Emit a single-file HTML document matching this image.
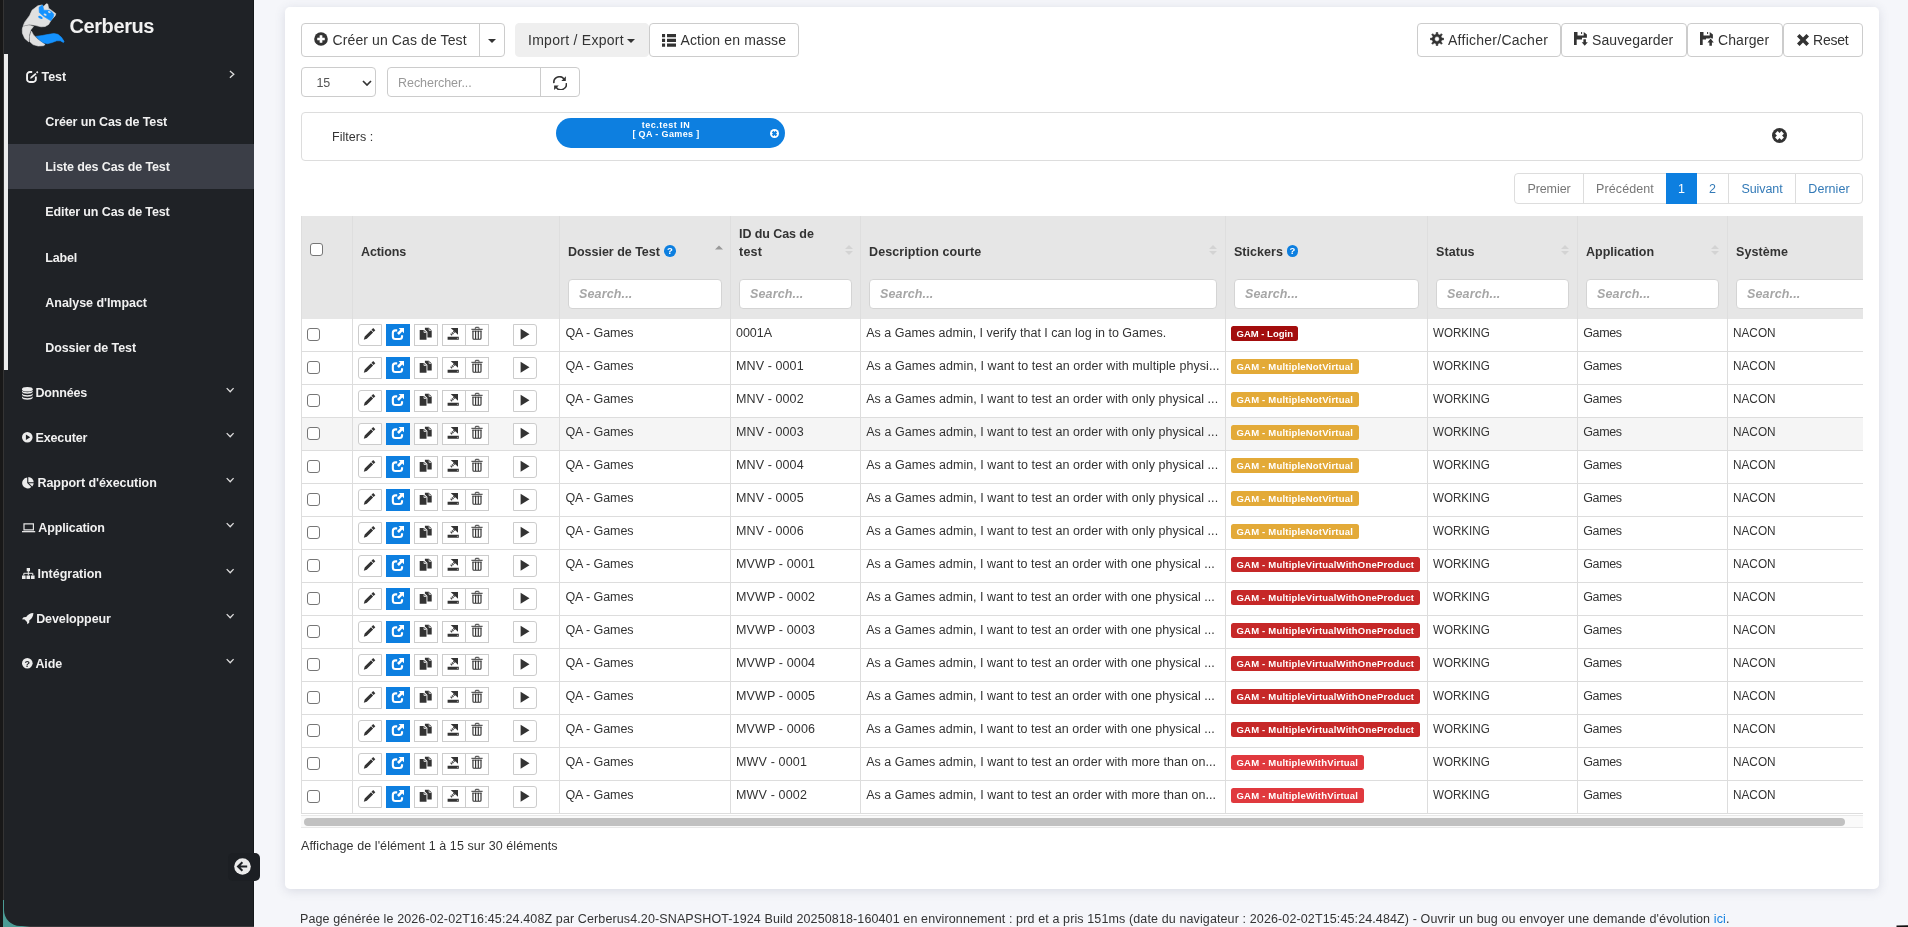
<!DOCTYPE html>
<html lang="fr">
<head>
<meta charset="utf-8">
<title>Cerberus - Liste des Cas de Test</title>
<style>
*{box-sizing:border-box;margin:0;padding:0}
html,body{width:1908px;height:927px;overflow:hidden}
body{background:#f5f6fa;font-family:"Liberation Sans",sans-serif;color:#333;font-size:12.5px;position:relative}
svg{display:block;fill:#333}
#wrap{position:absolute;left:0;top:0;width:1908px;height:927px;overflow:hidden;will-change:transform}
.t{position:absolute;white-space:nowrap;line-height:1}
#edge{position:absolute;left:0;top:0;width:3.4px;height:927px;background:#181818}
#edge2{position:absolute;left:3.4px;top:0;width:1.4px;height:900px;background:#343434}
#corner{position:absolute;left:0;top:887px;width:254px;height:40px;background:linear-gradient(90deg,#4c9c95 0,#4c9c95 22px,#38393b 30px)}
#corner2{position:absolute;left:1897px;top:924.6px;width:30px;height:30px;background:#111;transform:rotate(-2deg)}
/* sidebar */
#side{position:absolute;left:4px;top:0;width:250px;height:926px;background:#1f2226;border-bottom-left-radius:16px;border-right:1px solid #15181b}
#side .bar{position:absolute;left:0;top:54px;width:4px;height:316px;background:#ececec}
#side .active{position:absolute;left:4px;top:144px;width:246px;height:45px;background:#3b3e47}
#side .t{color:#f1f1f1;font-weight:bold;font-size:12.5px;letter-spacing:-.1px}
#side svg{position:absolute;fill:#ececec}
#toggle{position:absolute;left:228px;top:853px;width:32px;height:28px;background:#1c1f23;border-radius:5px}
#toggle svg{position:absolute;left:5.5px;top:4.5px}
/* main card */
#card{position:absolute;left:285px;top:7px;width:1594px;height:882px;background:#fff;border-radius:5px;box-shadow:0 2px 11px rgba(60,70,100,.15)}
.btn{position:absolute;top:23px;height:34px;border:1px solid #ccc;border-radius:4px;background:#fff}
.btn .t{font-size:14px;color:#333;top:9px;letter-spacing:.15px}
.btn svg{position:absolute;fill:#333}
.inp{position:absolute;border:1px solid #ccc;background:#fff;border-radius:4px}
#filter{position:absolute;left:301px;top:112px;width:1562px;height:48.5px;border:1px solid #ddd;border-radius:4px;background:#fff}
#pill span{display:inline-block}
#pill{position:absolute;left:556px;top:118px;width:229px;height:30px;border-radius:15px;background:#0d7fe0;color:#fff;font-weight:bold;font-size:9px;text-align:center;line-height:9.2px;padding:3px 9px 0 0;}
#pill svg{position:absolute;left:214px;top:10.5px}
#pag{position:absolute;left:1514px;top:173px;height:31px;width:349px}
#pag b{font-weight:normal;display:inline-block}
#pag span{position:absolute;top:0;height:31px;border:1px solid #ddd;line-height:30.5px;text-align:center;font-size:12.5px;color:#777;background:#fff;letter-spacing:-.05px}
#pag span.l{color:#337ab7}
#pag span.on{background:#0d7fe0;color:#fff;border-color:#0d7fe0}
/* table */
#tbl{position:absolute;left:301px;top:216px;width:1562px;height:598px;overflow:hidden}
#thead{position:absolute;left:0;top:0;width:1600px;height:102.6px;background:#e6e6e6}
#thead .v{position:absolute;top:0;width:1px;height:103px;background:#dedede}
#thead .t{font-weight:bold;font-size:12.5px;color:#333;letter-spacing:-.05px}
#thead .inp{top:63px;height:30px;border-color:#d4d4d4}
#thead .inp .t{font-style:italic;font-weight:bold;color:#a6a6a6;left:10px;top:8px;font-size:12.5px;letter-spacing:.1px}
#thead svg{position:absolute}
.q{position:absolute;width:11.6px;height:11.6px;border-radius:50%;background:#0d7fe0;color:#fff;font-size:9.5px;font-weight:bold;font-style:normal;text-align:center;line-height:12px}
.row{position:absolute;left:0;width:1600px;height:33px;border-bottom:1px solid #ddd;background:#fff}
.row.hov{background:#f5f5f5}
.vl{position:absolute;top:102px;width:1px;height:496px;background:#ddd}
.cb{position:absolute;left:6px;top:9px;width:13px;height:13px;border:1.3px solid #767676;border-radius:3px;background:#fff}
.ab{position:absolute;top:5px;width:24px;height:22px;border:1px solid #ccc;background:#fff}
.ab svg{position:absolute;fill:#333}
.ab.blue{background:#0d7fe0;border-color:#0d7fe0}.ab.first{border-radius:3px 0 0 3px}.ab.last{border-radius:0 3px 3px 0}
.c{position:absolute;top:8px;white-space:nowrap;line-height:1;font-size:12.5px;color:#333}
.c.up{transform-origin:0 0}
.st span{display:inline-block}
.st{position:absolute;left:930px;top:7px;height:14.5px;line-height:15.6px;padding:0 5.5px;border-radius:2.5px;color:#fff;font-weight:bold;font-size:9.5px;white-space:nowrap;letter-spacing:.2px}
.s1{background:#a30d0d}.s2{background:#e3aa38}.s3{background:#c62828}.s4{background:#e0393e}
#sb{position:absolute;left:301px;top:815px;width:1562px;height:13px;background:#fafafa;border-top:1px solid #e8e8e8;border-bottom:1px solid #e8e8e8}
#sb i{position:absolute;left:2.5px;top:2px;width:1541px;height:7.5px;border-radius:4px;background:#c1c1c1}
</style>
</head>
<body>
<div id="wrap">
<div id="corner"></div>
<div id="corner2"></div>
<div id="edge"></div><div id="edge2"></div>
<div id="side">
  <div class="bar"></div>
  <div class="active"></div>
  <svg width="60" height="54" viewBox="0 0 60 54" style="left:12px;top:0"><path d="M7.28 25.63 8.74 22.13 13.69 15.43 16.02 10.19 21.84 5.82 26.21 4.95 27.66 6.41 30.29 3.79 31.74 4.08 32.62 8.15 37.27 11.65 39.90 13.69 39.02 16.02 34.94 20.38 32.62 24.46 29.12 26.50 25.04 26.79 19.22 25.33 13.40 24.46ZM6.99 26.50 13.40 25.33 17.47 26.50 14.85 29.70 13.10 34.94 12.81 41.93 8.74 38.44 6.41 33.20 6.29 29.12ZM15.43 31.16 17.47 34.94 22.13 39.60 29.12 44.55 27.37 45.72 22.13 46.01 16.89 44.55 13.98 41.64 13.86 36.11Z" fill="#e0e0e0" stroke="#e0e0e0" stroke-width=".6" stroke-linejoin="round"/><path d="M23.01 7.28 26.50 4.95 27.84 10.19 32.62 10.37 35.53 11.65 37.86 14.27 37.27 16.89 34.94 20.68 33.20 19.80 27.96 16.60 23.30 12.52ZM20.09 36.40 26.21 35.53 32.62 34.36 37.86 33.49 41.93 34.36 45.43 37.27 48.05 41.35 47.47 42.52 44.26 40.77 40.77 40.77 36.11 42.52 31.45 43.68 27.37 42.81 23.30 39.90Z" fill="#1492ff" stroke="#1492ff" stroke-width=".6" stroke-linejoin="round"/><ellipse cx="24.4" cy="17.4" rx="2.4" ry="1.2" transform="rotate(25 24.4 17.4)" fill="#1492ff"/><ellipse cx="29.1" cy="14.6" rx="1.6" ry="1" transform="rotate(25 29.1 14.6)" fill="#e0e0e0"/><ellipse cx="33.3" cy="12.1" rx="1.45" ry=".85" transform="rotate(25 33.3 12.1)" fill="#e0e0e0"/></svg>
  <span class="t" style="left:65.4px;top:16px;font-size:20px;letter-spacing:-.45px;letter-spacing:-.39px">Cerberus</span>
  <svg width="13" height="13" viewBox="0 0 13 13" style="left:22px;top:70px"><path d="M6.2 2H3.8A2.75 2.75 0 0 0 1.05 4.75V9.2A2.75 2.75 0 0 0 3.8 11.95H7.1A2.75 2.75 0 0 0 9.85 9.2V6.6" fill="none" stroke="#f1f1f1" stroke-width="1.9"/><path d="M4.6 6.9 9.3 2.9 10.5 4.3 5.8 8.3 4.2 8.7ZM10 2.3 11.2 1.1 12.4 2.3 11.2 3.5Z" fill="#f1f1f1"/></svg><span class="t" style="left:37.5px;top:71px;letter-spacing:-.02px">Test</span><svg width="8" height="11" viewBox="0 0 8 11" style="left:224px;top:69px"><path d="M1.9 2 5.8 5.2 1.9 8.7" fill="none" stroke="#ddd" stroke-width="1.3"/></svg>
  <span class="t" style="left:41.3px;top:116px;letter-spacing:-.12px">Créer un Cas de Test</span>
  <span class="t" style="left:41.3px;top:161px;letter-spacing:-.12px">Liste des Cas de Test</span>
  <span class="t" style="left:41.3px;top:206px;letter-spacing:-.12px">Editer un Cas de Test</span>
  <span class="t" style="left:41.3px;top:252px;letter-spacing:-.21px">Label</span>
  <span class="t" style="left:41.3px;top:297px;letter-spacing:-.04px">Analyse d'Impact</span>
  <span class="t" style="left:41.3px;top:342px;letter-spacing:-.10px">Dossier de Test</span>
  <svg width="11" height="13" viewBox="0 0 11 13" style="left:17.8px;top:386.5px"><ellipse cx="5.35" cy="2.3" rx="5.35" ry="2.3"/><path d="M0 3.3C0 5.9 10.7 5.9 10.7 3.3V4.5C10.7 7.5 0 7.5 0 4.5Z"/><path d="M0 6.3C0 8.9 10.7 8.9 10.7 6.3V7.5C10.7 10.5 0 10.5 0 7.5Z"/><path d="M0 9.3C0 11.9 10.7 11.9 10.7 9.3V10.5C10.7 13.5 0 13.5 0 10.5Z"/></svg><span class="t" style="left:31.5px;top:387px;letter-spacing:-.18px">Données</span>
  <svg width="11" height="11" viewBox="0 0 11 11" style="left:17.8px;top:432.3px"><path fill-rule="evenodd" d="M5.3 0A5.3 5.3 0 1 0 5.3 10.6 5.3 5.3 0 1 0 5.3 0ZM3.9 2.6 8.2 5.3 3.9 8Z"/></svg><span class="t" style="left:31.5px;top:432px;letter-spacing:-.13px">Executer</span>
  <svg width="12" height="12" viewBox="0 0 12 12" style="left:17.8px;top:476.8px"><path d="M5.2.6A5.4 5.4 0 1 0 9.3 9.9L5.2 6Z"/><path d="M6.3 0A5.4 5.4 0 0 1 11.7 5.2H6.3Z"/><path d="M6.9 6.3H11.7A5.4 5.4 0 0 1 10.2 9.4Z"/></svg><span class="t" style="left:33.5px;top:477px;letter-spacing:-.06px">Rapport d'éxecution</span>
  <svg width="14" height="10" viewBox="0 0 14 10" style="left:17.8px;top:522.5px"><path d="M2 .9H11.4V6.8H2Z" fill="none" stroke="#e4e4e4" stroke-width="1.2"/><path d="M0 8H13.2V9.3H0Z" fill="#e4e4e4"/></svg><span class="t" style="left:34.3px;top:522px;letter-spacing:-.14px">Application</span>
  <svg width="13" height="11" viewBox="0 0 13 11" style="left:17.7px;top:568px"><path d="M4.7 0H8V3.2H4.7ZM0 7.4H3.6V11H0ZM4.5 7.4H8.1V11H4.5ZM9 7.4H12.6V11H9Z"/><path d="M6.3 3V7.4M1.8 7.4V5.3H10.8V7.4" fill="none" stroke="#ececec" stroke-width="1"/></svg><span class="t" style="left:33.5px;top:568px;letter-spacing:-.01px">Intégration</span>
  <svg width="12" height="11.5" viewBox="0 0 12 11.5" style="left:17.7px;top:613.4px"><path d="M11.4 0C8 .1 5.6 1.6 4.2 4.1L1.6 4.3 0 6.2 2.6 6.5 5 8.9 5.3 11.3 7.2 9.8 7.4 7.2C9.9 5.8 11.3 3.4 11.4 0Z"/></svg><span class="t" style="left:32.2px;top:613px;letter-spacing:-.10px">Developpeur</span>
  <svg width="11" height="11" viewBox="0 0 11 11" style="left:17.7px;top:658.3px"><circle cx="5.3" cy="5.3" r="5.3"/><text x="5.3" y="8.5" text-anchor="middle" font-family="Liberation Sans, sans-serif" font-weight="bold" font-size="9" fill="#1f2226">?</text></svg><span class="t" style="left:31.5px;top:658px;letter-spacing:-.17px">Aide</span>
  <svg width="10" height="6" viewBox="0 0 10 6" style="left:221px;top:387px"><path d="M1.7 1.1 5.2 4.7 8.6 1.1" fill="none" stroke="#ddd" stroke-width="1.3"/></svg><svg width="10" height="6" viewBox="0 0 10 6" style="left:221px;top:432px"><path d="M1.7 1.1 5.2 4.7 8.6 1.1" fill="none" stroke="#ddd" stroke-width="1.3"/></svg><svg width="10" height="6" viewBox="0 0 10 6" style="left:221px;top:477px"><path d="M1.7 1.1 5.2 4.7 8.6 1.1" fill="none" stroke="#ddd" stroke-width="1.3"/></svg><svg width="10" height="6" viewBox="0 0 10 6" style="left:221px;top:522px"><path d="M1.7 1.1 5.2 4.7 8.6 1.1" fill="none" stroke="#ddd" stroke-width="1.3"/></svg><svg width="10" height="6" viewBox="0 0 10 6" style="left:221px;top:568px"><path d="M1.7 1.1 5.2 4.7 8.6 1.1" fill="none" stroke="#ddd" stroke-width="1.3"/></svg><svg width="10" height="6" viewBox="0 0 10 6" style="left:221px;top:613px"><path d="M1.7 1.1 5.2 4.7 8.6 1.1" fill="none" stroke="#ddd" stroke-width="1.3"/></svg><svg width="10" height="6" viewBox="0 0 10 6" style="left:221px;top:658px"><path d="M1.7 1.1 5.2 4.7 8.6 1.1" fill="none" stroke="#ddd" stroke-width="1.3"/></svg>
</div>
<div id="toggle"><svg width="17" height="17" viewBox="0 0 17 17"><circle cx="8.5" cy="8.5" r="8.3" fill="#ececec"/><path d="M8.4 4.2 4 8.5 8.4 12.8M4.4 8.5H13.2" fill="none" stroke="#1f2226" stroke-width="2"/></svg></div>
<div id="card"></div>
<div id="main">
  <div class="btn" style="left:301px;width:204px"><span style="position:absolute;left:12px;top:8px"><svg width="14" height="14" viewBox="0 0 14 14"><circle cx="7" cy="7" r="6.8"/><path d="M5.9 3.5H8.1V5.9H10.5V8.1H8.1V10.5H5.9V8.1H3.5V5.9H5.9Z" fill="#fff" stroke="#fff" stroke-width=".5" stroke-linejoin="round"/></svg></span><span class="t" style="left:30.5px;letter-spacing:.11px">Créer un Cas de Test</span><i style="position:absolute;left:177px;top:-1px;width:1px;height:34px;background:#ccc"></i><span style="position:absolute;left:186px;top:15px"><svg width="8" height="4" viewBox="0 0 8 4"><path d="M0 0H8L4 4Z"/></svg></span></div>
  <div class="btn" style="left:515px;width:134px;background:#efefef;border-color:#efefef"><span class="t" style="left:12px;letter-spacing:.27px">Import / Export</span><span style="position:absolute;left:111px;top:15px"><svg width="8" height="4" viewBox="0 0 8 4"><path d="M0 0H8L4 4Z"/></svg></span></div>
  <div class="btn" style="left:649px;width:150px"><span style="position:absolute;left:12px;top:10px"><svg width="14" height="13" viewBox="0 0 14 13"><path d="M0 0H3.1V3.3H0ZM5 0H14V3.3H5ZM0 4.75H3.1V8.05H0ZM5 4.75H14V8.05H5ZM0 9.5H3.1V12.8H0ZM5 9.5H14V12.8H5Z"/></svg></span><span class="t" style="left:30.5px;letter-spacing:.14px">Action en masse</span></div>
  <div class="btn" style="left:1417px;width:143.5px"><span style="position:absolute;left:12px;top:8px"><svg width="14" height="14" viewBox="0 0 14 14"><path fill-rule="evenodd" stroke="#333" stroke-width=".5" stroke-linejoin="round" d="M6.30 0.14 7.70 0.14 7.96 2.19 9.72 2.93 11.36 1.65 12.35 2.64 11.07 4.28 11.81 6.04 13.86 6.30 13.86 7.70 11.81 7.96 11.07 9.72 12.35 11.36 11.36 12.35 9.72 11.07 7.96 11.81 7.70 13.86 6.30 13.86 6.04 11.81 4.28 11.07 2.64 12.35 1.65 11.36 2.93 9.72 2.19 7.96 0.14 7.70 0.14 6.30 2.19 6.04 2.93 4.28 1.65 2.64 2.64 1.65 4.28 2.93 6.04 2.19ZM4.6 7a2.4 2.4 0 1 0 4.8 0a2.4 2.4 0 1 0 -4.8 0Z"/></svg></span><span class="t" style="left:30px;letter-spacing:.26px">Afficher/Cacher</span></div>
  <div class="btn" style="left:1561px;width:125.5px"><span style="position:absolute;left:12px;top:8px"><svg width="14" height="14" viewBox="0 0 14 14"><path d="M0 0H3.5V3.5H9.7V0L12.9 2.6V5.8H8V7.6H2.7V12.9H0ZM7.1 0H8.1V2H7.1ZM9.4 7.2H11.9V10.3H13.8L10.7 13.8 7.7 10.3H9.4Z"/></svg></span><span class="t" style="left:30px;letter-spacing:.11px">Sauvegarder</span></div>
  <div class="btn" style="left:1687px;width:95.5px"><span style="position:absolute;left:12px;top:8px"><svg width="14" height="14" viewBox="0 0 14 14"><path d="M0 0H3.5V3.5H9.7V0L12.9 2.6V6.6H6V7.6H2.7V12.9H0ZM7.1 0H8.1V2H7.1Z"/><path d="M9.4 13.8H11.9V10.4H13.8L10.6 6.6 7.5 10.4H9.4Z" stroke="#fff" stroke-width="1.3" paint-order="stroke"/></svg></span><span class="t" style="left:30px;letter-spacing:.09px">Charger</span></div>
  <div class="btn" style="left:1783px;width:80px"><span style="position:absolute;left:13px;top:10px"><svg width="12" height="12" viewBox="0 0 11.3 11.3"><path d="M2.4 0 5.65 3.25 8.9 0 11.3 2.4 8.05 5.65 11.3 8.9 8.9 11.3 5.65 8.05 2.4 11.3 0 8.9 3.25 5.65 0 2.4Z"/></svg></span><span class="t" style="left:29px;letter-spacing:-.22px">Reset</span></div>

  <div class="inp" style="left:301px;top:67px;width:75px;height:30px"><span class="t" style="left:14.4px;top:8.5px;font-size:12.5px;color:#555">15</span><svg width="10" height="6" viewBox="0 0 10 6" style="position:absolute;left:59.5px;top:12px"><path d="M1 1 5 5 9 1" fill="none" stroke="#333" stroke-width="1.7"/></svg></div>
  <div class="inp" style="left:387px;top:67px;width:193px;height:30px"><span class="t" style="left:10px;top:9px;font-size:12.5px;color:#999;letter-spacing:-.05px">Rechercher...</span><i style="position:absolute;left:152px;top:0;width:1px;height:28px;background:#ccc"></i><span style="position:absolute;left:165px;top:7.8px"><svg width="14" height="14.2" viewBox="0 0 14 14.2"><path d="M.9 7.1A5.6 5.6 0 0 1 11.2 3.4M13.3 7.2A5.6 5.6 0 0 1 2.9 10.9" fill="none" stroke="#333" stroke-width="1.6"/><path d="M8.3 4.9 12.9.3 12.8 5.1ZM1.1 9.5 1.1 13.9 5.8 9.6Z"/></svg></span></div>

  <div id="filter"><span class="t" style="left:30px;top:17.5px;font-size:12.5px;letter-spacing:-.1px;letter-spacing:.04px">Filters :</span><span style="position:absolute;left:1470px;top:15.2px"><svg width="15" height="15" viewBox="0 0 14 14"><circle cx="7" cy="7" r="7" fill="#333"/><path d="M5.25 2.85 7 4.6 8.75 2.85 11.15 5.25 9.4 7 11.15 8.75 8.75 11.15 7 9.4 5.25 11.15 2.85 8.75 4.6 7 2.85 5.25Z" fill="#fff"/></svg></span></div>
  <div id="pill"><span style="letter-spacing:.52px">tec.test IN</span><br><span style="letter-spacing:.36px">[ QA - Games ]</span><svg width="9" height="9" viewBox="0 0 14 14"><circle cx="7" cy="7" r="7" fill="#fff"/><path d="M5.25 2.85 7 4.6 8.75 2.85 11.15 5.25 9.4 7 11.15 8.75 8.75 11.15 7 9.4 5.25 11.15 2.85 8.75 4.6 7 2.85 5.25Z" fill="#0d7fe0"/></svg></div>

  <div id="pag"><span style="left:0;width:70px;border-radius:4px 0 0 4px"><b style="letter-spacing:-.08px">Premier</b></span><span style="left:69px;width:84px"><b style="letter-spacing:.09px">Précédent</b></span><span class="l" style="left:182px;width:33px">2</span><span class="l" style="left:214px;width:68px"><b style="letter-spacing:-.07px">Suivant</b></span><span class="l" style="left:281px;width:68px;border-radius:0 4px 4px 0"><b style="letter-spacing:.04px">Dernier</b></span><span class="on" style="left:152px;width:31px">1</span></div>

  <div id="tbl">
    <div id="thead">
      <i class="v" style="left:0"></i><i class="v" style="left:51px"></i><i class="v" style="left:258px"></i><i class="v" style="left:429px"></i><i class="v" style="left:559px"></i><i class="v" style="left:924px"></i><i class="v" style="left:1126px"></i><i class="v" style="left:1276px"></i><i class="v" style="left:1426px"></i>
      <i class="cb" style="left:9px;top:27px"></i>
      <span class="t" style="left:60px;top:30px;letter-spacing:-.12px">Actions</span>
      <span class="t" style="left:267px;top:30px;letter-spacing:-.02px">Dossier de Test</span><i class="q" style="left:363px;top:29px">?</i>
      <span class="t" style="left:438px;top:11.5px;letter-spacing:-.08px">ID du Cas de</span><span class="t" style="left:438px;top:30px;letter-spacing:.22px">test</span>
      <span class="t" style="left:568px;top:30px;letter-spacing:.10px">Description courte</span>
      <span class="t" style="left:933px;top:30px;letter-spacing:.03px">Stickers</span><i class="q" style="left:985.5px;top:29px">?</i>
      <span class="t" style="left:1135px;top:30px;letter-spacing:.07px">Status</span>
      <span class="t" style="left:1285px;top:30px;letter-spacing:.00px">Application</span>
      <span class="t" style="left:1435px;top:30px;letter-spacing:.07px">Système</span>
      <span style="position:absolute;left:413.8px;top:29.3px"><svg width="8" height="5" viewBox="0 0 8 5"><path d="M0 4.5H8L4 .5Z" fill="#999"/></svg></span>
      <span style="position:absolute;left:543.5px;top:28px"><svg width="8" height="12" viewBox="0 0 8 12"><path d="M0 5H8L4 1Z" fill="#d3d3d3"/><path d="M0 7H8L4 11Z" fill="#d3d3d3"/></svg></span>
      <span style="position:absolute;left:908px;top:28px"><svg width="8" height="12" viewBox="0 0 8 12"><path d="M0 5H8L4 1Z" fill="#d3d3d3"/><path d="M0 7H8L4 11Z" fill="#d3d3d3"/></svg></span>
      <span style="position:absolute;left:1260px;top:28px"><svg width="8" height="12" viewBox="0 0 8 12"><path d="M0 5H8L4 1Z" fill="#d3d3d3"/><path d="M0 7H8L4 11Z" fill="#d3d3d3"/></svg></span>
      <span style="position:absolute;left:1410px;top:28px"><svg width="8" height="12" viewBox="0 0 8 12"><path d="M0 5H8L4 1Z" fill="#d3d3d3"/><path d="M0 7H8L4 11Z" fill="#d3d3d3"/></svg></span>
      <div class="inp" style="left:267px;width:154px"><span class="t" style="letter-spacing:.15px">Search...</span></div>
      <div class="inp" style="left:438px;width:113px"><span class="t" style="letter-spacing:.15px">Search...</span></div>
      <div class="inp" style="left:568px;width:348px"><span class="t" style="letter-spacing:.15px">Search...</span></div>
      <div class="inp" style="left:933px;width:185px"><span class="t" style="letter-spacing:.15px">Search...</span></div>
      <div class="inp" style="left:1135px;width:133px"><span class="t" style="letter-spacing:.15px">Search...</span></div>
      <div class="inp" style="left:1285px;width:133px"><span class="t" style="letter-spacing:.15px">Search...</span></div>
      <div class="inp" style="left:1435px;width:160px"><span class="t" style="letter-spacing:.15px">Search...</span></div>
    </div>
<div class="row" style="top:103px">
<i class="cb"></i>
<a class="ab first" style="left:57px"><svg width="24" height="22" viewBox="0 0 24 22" style="left:-1px;top:-1px"><path transform="translate(5.6 4)" d="M.2 11.8 1.1 8.6 7.4 2.3 9.5 4.4 3.2 10.7ZM7.9 1.8 9.6.1 11.7 2.2 10 3.9Z"/></svg></a><a class="ab blue" style="left:85px"><svg width="24" height="22" viewBox="0 0 24 22" style="left:-1px;top:-1px"><g transform="translate(5.8 3.9)"><path d="M5.4 2.45H3.6A2.55 2.55 0 0 0 1.05 5V8.6A2.55 2.55 0 0 0 3.6 11.15H7.7A2.55 2.55 0 0 0 10.25 8.6V7.4" fill="none" stroke="#fff" stroke-width="2.1"/><path d="M6.8 0H12.2V5.4L10.45 3.65 7.1 7 5.2 5.1 8.55 1.75Z" fill="#fff"/></g></svg></a><a class="ab" style="left:113px"><svg width="24" height="22" viewBox="0 0 24 22" style="left:-1px;top:-1px"><g transform="translate(5.7 3.8)"><path d="M0 2.2H4.3L6.8 4.7V11.9H0ZM5.2 0H9.3L12 2.7V9.8H7.7V4.3L5.2 1.8Z"/><path d="M9.4.4V2.6H11.7M4.3 2.6V4.7H6.5" stroke="#fff" stroke-width=".7" fill="none"/></g></svg></a><a class="ab" style="left:141px"><svg width="24" height="22" viewBox="0 0 24 22" style="left:-1px;top:-1px"><path d="M5.6 12.8H16.8V15.7H5.6ZM8.7 3.9H16V10.7Z"/><path d="M12.6 7.4 8.9 10.9" stroke="#444" stroke-width="2.2" stroke-dasharray="1.3 .6" fill="none"/><circle cx="15.4" cy="14.3" r=".55" fill="#ccc"/></svg></a><a class="ab" style="left:164px"><svg width="24" height="22" viewBox="0 0 24 22" style="left:-1px;top:-1px"><path d="M6.4 4.8H17.6V5.8H6.4Z"/><path d="M10.3 4.8V3.9A.6.6 0 0 1 10.9 3.3H13.4A.6.6 0 0 1 14 3.9V4.8" fill="none" stroke="#333" stroke-width="1"/><path d="M7.95 6.8V14.2A1 1 0 0 0 8.95 15.2H15A1 1 0 0 0 16 14.2V6.8M10.6 6.8V15M13.3 6.8V15" fill="none" stroke="#333" stroke-width="1.15"/><path d="M7.4 6.7H16.55V7.6H7.4Z"/></svg></a><a class="ab last" style="left:212px"><svg width="24" height="22" viewBox="0 0 24 22" style="left:-1px;top:-1px"><path d="M7.6 4.8 16.5 10.25 7.6 15.7Z"/></svg></a>
<span class="c" style="left:264.4px;letter-spacing:-.07px">QA - Games</span><span class="c" style="left:435px;letter-spacing:-.03px">0001A</span><span class="c" style="left:565.2px;letter-spacing:.01px">As a Games admin, I verify that I can log in to Games.</span><span class="st s1"><span style="letter-spacing:.00px">GAM - Login</span></span><span class="c up" style="left:1132.3px;transform:scaleX(0.928)">WORKING</span><span class="c" style="left:1282.2px;letter-spacing:-.34px">Games</span><span class="c up" style="left:1432.3px;transform:scaleX(0.943)">NACON</span>
</div>
<div class="row" style="top:136px">
<i class="cb"></i>
<a class="ab first" style="left:57px"><svg width="24" height="22" viewBox="0 0 24 22" style="left:-1px;top:-1px"><path transform="translate(5.6 4)" d="M.2 11.8 1.1 8.6 7.4 2.3 9.5 4.4 3.2 10.7ZM7.9 1.8 9.6.1 11.7 2.2 10 3.9Z"/></svg></a><a class="ab blue" style="left:85px"><svg width="24" height="22" viewBox="0 0 24 22" style="left:-1px;top:-1px"><g transform="translate(5.8 3.9)"><path d="M5.4 2.45H3.6A2.55 2.55 0 0 0 1.05 5V8.6A2.55 2.55 0 0 0 3.6 11.15H7.7A2.55 2.55 0 0 0 10.25 8.6V7.4" fill="none" stroke="#fff" stroke-width="2.1"/><path d="M6.8 0H12.2V5.4L10.45 3.65 7.1 7 5.2 5.1 8.55 1.75Z" fill="#fff"/></g></svg></a><a class="ab" style="left:113px"><svg width="24" height="22" viewBox="0 0 24 22" style="left:-1px;top:-1px"><g transform="translate(5.7 3.8)"><path d="M0 2.2H4.3L6.8 4.7V11.9H0ZM5.2 0H9.3L12 2.7V9.8H7.7V4.3L5.2 1.8Z"/><path d="M9.4.4V2.6H11.7M4.3 2.6V4.7H6.5" stroke="#fff" stroke-width=".7" fill="none"/></g></svg></a><a class="ab" style="left:141px"><svg width="24" height="22" viewBox="0 0 24 22" style="left:-1px;top:-1px"><path d="M5.6 12.8H16.8V15.7H5.6ZM8.7 3.9H16V10.7Z"/><path d="M12.6 7.4 8.9 10.9" stroke="#444" stroke-width="2.2" stroke-dasharray="1.3 .6" fill="none"/><circle cx="15.4" cy="14.3" r=".55" fill="#ccc"/></svg></a><a class="ab" style="left:164px"><svg width="24" height="22" viewBox="0 0 24 22" style="left:-1px;top:-1px"><path d="M6.4 4.8H17.6V5.8H6.4Z"/><path d="M10.3 4.8V3.9A.6.6 0 0 1 10.9 3.3H13.4A.6.6 0 0 1 14 3.9V4.8" fill="none" stroke="#333" stroke-width="1"/><path d="M7.95 6.8V14.2A1 1 0 0 0 8.95 15.2H15A1 1 0 0 0 16 14.2V6.8M10.6 6.8V15M13.3 6.8V15" fill="none" stroke="#333" stroke-width="1.15"/><path d="M7.4 6.7H16.55V7.6H7.4Z"/></svg></a><a class="ab last" style="left:212px"><svg width="24" height="22" viewBox="0 0 24 22" style="left:-1px;top:-1px"><path d="M7.6 4.8 16.5 10.25 7.6 15.7Z"/></svg></a>
<span class="c" style="left:264.4px;letter-spacing:-.07px">QA - Games</span><span class="c" style="left:435px;letter-spacing:.10px">MNV - 0001</span><span class="c" style="left:565.2px;letter-spacing:.06px">As a Games admin, I want to test an order with multiple physi...</span><span class="st s2"><span style="letter-spacing:.20px">GAM - MultipleNotVirtual</span></span><span class="c up" style="left:1132.3px;transform:scaleX(0.928)">WORKING</span><span class="c" style="left:1282.2px;letter-spacing:-.34px">Games</span><span class="c up" style="left:1432.3px;transform:scaleX(0.943)">NACON</span>
</div>
<div class="row" style="top:169px">
<i class="cb"></i>
<a class="ab first" style="left:57px"><svg width="24" height="22" viewBox="0 0 24 22" style="left:-1px;top:-1px"><path transform="translate(5.6 4)" d="M.2 11.8 1.1 8.6 7.4 2.3 9.5 4.4 3.2 10.7ZM7.9 1.8 9.6.1 11.7 2.2 10 3.9Z"/></svg></a><a class="ab blue" style="left:85px"><svg width="24" height="22" viewBox="0 0 24 22" style="left:-1px;top:-1px"><g transform="translate(5.8 3.9)"><path d="M5.4 2.45H3.6A2.55 2.55 0 0 0 1.05 5V8.6A2.55 2.55 0 0 0 3.6 11.15H7.7A2.55 2.55 0 0 0 10.25 8.6V7.4" fill="none" stroke="#fff" stroke-width="2.1"/><path d="M6.8 0H12.2V5.4L10.45 3.65 7.1 7 5.2 5.1 8.55 1.75Z" fill="#fff"/></g></svg></a><a class="ab" style="left:113px"><svg width="24" height="22" viewBox="0 0 24 22" style="left:-1px;top:-1px"><g transform="translate(5.7 3.8)"><path d="M0 2.2H4.3L6.8 4.7V11.9H0ZM5.2 0H9.3L12 2.7V9.8H7.7V4.3L5.2 1.8Z"/><path d="M9.4.4V2.6H11.7M4.3 2.6V4.7H6.5" stroke="#fff" stroke-width=".7" fill="none"/></g></svg></a><a class="ab" style="left:141px"><svg width="24" height="22" viewBox="0 0 24 22" style="left:-1px;top:-1px"><path d="M5.6 12.8H16.8V15.7H5.6ZM8.7 3.9H16V10.7Z"/><path d="M12.6 7.4 8.9 10.9" stroke="#444" stroke-width="2.2" stroke-dasharray="1.3 .6" fill="none"/><circle cx="15.4" cy="14.3" r=".55" fill="#ccc"/></svg></a><a class="ab" style="left:164px"><svg width="24" height="22" viewBox="0 0 24 22" style="left:-1px;top:-1px"><path d="M6.4 4.8H17.6V5.8H6.4Z"/><path d="M10.3 4.8V3.9A.6.6 0 0 1 10.9 3.3H13.4A.6.6 0 0 1 14 3.9V4.8" fill="none" stroke="#333" stroke-width="1"/><path d="M7.95 6.8V14.2A1 1 0 0 0 8.95 15.2H15A1 1 0 0 0 16 14.2V6.8M10.6 6.8V15M13.3 6.8V15" fill="none" stroke="#333" stroke-width="1.15"/><path d="M7.4 6.7H16.55V7.6H7.4Z"/></svg></a><a class="ab last" style="left:212px"><svg width="24" height="22" viewBox="0 0 24 22" style="left:-1px;top:-1px"><path d="M7.6 4.8 16.5 10.25 7.6 15.7Z"/></svg></a>
<span class="c" style="left:264.4px;letter-spacing:-.07px">QA - Games</span><span class="c" style="left:435px;letter-spacing:.10px">MNV - 0002</span><span class="c" style="left:565.2px;letter-spacing:.05px">As a Games admin, I want to test an order with only physical ...</span><span class="st s2"><span style="letter-spacing:.20px">GAM - MultipleNotVirtual</span></span><span class="c up" style="left:1132.3px;transform:scaleX(0.928)">WORKING</span><span class="c" style="left:1282.2px;letter-spacing:-.34px">Games</span><span class="c up" style="left:1432.3px;transform:scaleX(0.943)">NACON</span>
</div>
<div class="row hov" style="top:202px">
<i class="cb"></i>
<a class="ab first" style="left:57px"><svg width="24" height="22" viewBox="0 0 24 22" style="left:-1px;top:-1px"><path transform="translate(5.6 4)" d="M.2 11.8 1.1 8.6 7.4 2.3 9.5 4.4 3.2 10.7ZM7.9 1.8 9.6.1 11.7 2.2 10 3.9Z"/></svg></a><a class="ab blue" style="left:85px"><svg width="24" height="22" viewBox="0 0 24 22" style="left:-1px;top:-1px"><g transform="translate(5.8 3.9)"><path d="M5.4 2.45H3.6A2.55 2.55 0 0 0 1.05 5V8.6A2.55 2.55 0 0 0 3.6 11.15H7.7A2.55 2.55 0 0 0 10.25 8.6V7.4" fill="none" stroke="#fff" stroke-width="2.1"/><path d="M6.8 0H12.2V5.4L10.45 3.65 7.1 7 5.2 5.1 8.55 1.75Z" fill="#fff"/></g></svg></a><a class="ab" style="left:113px"><svg width="24" height="22" viewBox="0 0 24 22" style="left:-1px;top:-1px"><g transform="translate(5.7 3.8)"><path d="M0 2.2H4.3L6.8 4.7V11.9H0ZM5.2 0H9.3L12 2.7V9.8H7.7V4.3L5.2 1.8Z"/><path d="M9.4.4V2.6H11.7M4.3 2.6V4.7H6.5" stroke="#fff" stroke-width=".7" fill="none"/></g></svg></a><a class="ab" style="left:141px"><svg width="24" height="22" viewBox="0 0 24 22" style="left:-1px;top:-1px"><path d="M5.6 12.8H16.8V15.7H5.6ZM8.7 3.9H16V10.7Z"/><path d="M12.6 7.4 8.9 10.9" stroke="#444" stroke-width="2.2" stroke-dasharray="1.3 .6" fill="none"/><circle cx="15.4" cy="14.3" r=".55" fill="#ccc"/></svg></a><a class="ab" style="left:164px"><svg width="24" height="22" viewBox="0 0 24 22" style="left:-1px;top:-1px"><path d="M6.4 4.8H17.6V5.8H6.4Z"/><path d="M10.3 4.8V3.9A.6.6 0 0 1 10.9 3.3H13.4A.6.6 0 0 1 14 3.9V4.8" fill="none" stroke="#333" stroke-width="1"/><path d="M7.95 6.8V14.2A1 1 0 0 0 8.95 15.2H15A1 1 0 0 0 16 14.2V6.8M10.6 6.8V15M13.3 6.8V15" fill="none" stroke="#333" stroke-width="1.15"/><path d="M7.4 6.7H16.55V7.6H7.4Z"/></svg></a><a class="ab last" style="left:212px"><svg width="24" height="22" viewBox="0 0 24 22" style="left:-1px;top:-1px"><path d="M7.6 4.8 16.5 10.25 7.6 15.7Z"/></svg></a>
<span class="c" style="left:264.4px;letter-spacing:-.07px">QA - Games</span><span class="c" style="left:435px;letter-spacing:.10px">MNV - 0003</span><span class="c" style="left:565.2px;letter-spacing:.05px">As a Games admin, I want to test an order with only physical ...</span><span class="st s2"><span style="letter-spacing:.20px">GAM - MultipleNotVirtual</span></span><span class="c up" style="left:1132.3px;transform:scaleX(0.928)">WORKING</span><span class="c" style="left:1282.2px;letter-spacing:-.34px">Games</span><span class="c up" style="left:1432.3px;transform:scaleX(0.943)">NACON</span>
</div>
<div class="row" style="top:235px">
<i class="cb"></i>
<a class="ab first" style="left:57px"><svg width="24" height="22" viewBox="0 0 24 22" style="left:-1px;top:-1px"><path transform="translate(5.6 4)" d="M.2 11.8 1.1 8.6 7.4 2.3 9.5 4.4 3.2 10.7ZM7.9 1.8 9.6.1 11.7 2.2 10 3.9Z"/></svg></a><a class="ab blue" style="left:85px"><svg width="24" height="22" viewBox="0 0 24 22" style="left:-1px;top:-1px"><g transform="translate(5.8 3.9)"><path d="M5.4 2.45H3.6A2.55 2.55 0 0 0 1.05 5V8.6A2.55 2.55 0 0 0 3.6 11.15H7.7A2.55 2.55 0 0 0 10.25 8.6V7.4" fill="none" stroke="#fff" stroke-width="2.1"/><path d="M6.8 0H12.2V5.4L10.45 3.65 7.1 7 5.2 5.1 8.55 1.75Z" fill="#fff"/></g></svg></a><a class="ab" style="left:113px"><svg width="24" height="22" viewBox="0 0 24 22" style="left:-1px;top:-1px"><g transform="translate(5.7 3.8)"><path d="M0 2.2H4.3L6.8 4.7V11.9H0ZM5.2 0H9.3L12 2.7V9.8H7.7V4.3L5.2 1.8Z"/><path d="M9.4.4V2.6H11.7M4.3 2.6V4.7H6.5" stroke="#fff" stroke-width=".7" fill="none"/></g></svg></a><a class="ab" style="left:141px"><svg width="24" height="22" viewBox="0 0 24 22" style="left:-1px;top:-1px"><path d="M5.6 12.8H16.8V15.7H5.6ZM8.7 3.9H16V10.7Z"/><path d="M12.6 7.4 8.9 10.9" stroke="#444" stroke-width="2.2" stroke-dasharray="1.3 .6" fill="none"/><circle cx="15.4" cy="14.3" r=".55" fill="#ccc"/></svg></a><a class="ab" style="left:164px"><svg width="24" height="22" viewBox="0 0 24 22" style="left:-1px;top:-1px"><path d="M6.4 4.8H17.6V5.8H6.4Z"/><path d="M10.3 4.8V3.9A.6.6 0 0 1 10.9 3.3H13.4A.6.6 0 0 1 14 3.9V4.8" fill="none" stroke="#333" stroke-width="1"/><path d="M7.95 6.8V14.2A1 1 0 0 0 8.95 15.2H15A1 1 0 0 0 16 14.2V6.8M10.6 6.8V15M13.3 6.8V15" fill="none" stroke="#333" stroke-width="1.15"/><path d="M7.4 6.7H16.55V7.6H7.4Z"/></svg></a><a class="ab last" style="left:212px"><svg width="24" height="22" viewBox="0 0 24 22" style="left:-1px;top:-1px"><path d="M7.6 4.8 16.5 10.25 7.6 15.7Z"/></svg></a>
<span class="c" style="left:264.4px;letter-spacing:-.07px">QA - Games</span><span class="c" style="left:435px;letter-spacing:.10px">MNV - 0004</span><span class="c" style="left:565.2px;letter-spacing:.05px">As a Games admin, I want to test an order with only physical ...</span><span class="st s2"><span style="letter-spacing:.20px">GAM - MultipleNotVirtual</span></span><span class="c up" style="left:1132.3px;transform:scaleX(0.928)">WORKING</span><span class="c" style="left:1282.2px;letter-spacing:-.34px">Games</span><span class="c up" style="left:1432.3px;transform:scaleX(0.943)">NACON</span>
</div>
<div class="row" style="top:268px">
<i class="cb"></i>
<a class="ab first" style="left:57px"><svg width="24" height="22" viewBox="0 0 24 22" style="left:-1px;top:-1px"><path transform="translate(5.6 4)" d="M.2 11.8 1.1 8.6 7.4 2.3 9.5 4.4 3.2 10.7ZM7.9 1.8 9.6.1 11.7 2.2 10 3.9Z"/></svg></a><a class="ab blue" style="left:85px"><svg width="24" height="22" viewBox="0 0 24 22" style="left:-1px;top:-1px"><g transform="translate(5.8 3.9)"><path d="M5.4 2.45H3.6A2.55 2.55 0 0 0 1.05 5V8.6A2.55 2.55 0 0 0 3.6 11.15H7.7A2.55 2.55 0 0 0 10.25 8.6V7.4" fill="none" stroke="#fff" stroke-width="2.1"/><path d="M6.8 0H12.2V5.4L10.45 3.65 7.1 7 5.2 5.1 8.55 1.75Z" fill="#fff"/></g></svg></a><a class="ab" style="left:113px"><svg width="24" height="22" viewBox="0 0 24 22" style="left:-1px;top:-1px"><g transform="translate(5.7 3.8)"><path d="M0 2.2H4.3L6.8 4.7V11.9H0ZM5.2 0H9.3L12 2.7V9.8H7.7V4.3L5.2 1.8Z"/><path d="M9.4.4V2.6H11.7M4.3 2.6V4.7H6.5" stroke="#fff" stroke-width=".7" fill="none"/></g></svg></a><a class="ab" style="left:141px"><svg width="24" height="22" viewBox="0 0 24 22" style="left:-1px;top:-1px"><path d="M5.6 12.8H16.8V15.7H5.6ZM8.7 3.9H16V10.7Z"/><path d="M12.6 7.4 8.9 10.9" stroke="#444" stroke-width="2.2" stroke-dasharray="1.3 .6" fill="none"/><circle cx="15.4" cy="14.3" r=".55" fill="#ccc"/></svg></a><a class="ab" style="left:164px"><svg width="24" height="22" viewBox="0 0 24 22" style="left:-1px;top:-1px"><path d="M6.4 4.8H17.6V5.8H6.4Z"/><path d="M10.3 4.8V3.9A.6.6 0 0 1 10.9 3.3H13.4A.6.6 0 0 1 14 3.9V4.8" fill="none" stroke="#333" stroke-width="1"/><path d="M7.95 6.8V14.2A1 1 0 0 0 8.95 15.2H15A1 1 0 0 0 16 14.2V6.8M10.6 6.8V15M13.3 6.8V15" fill="none" stroke="#333" stroke-width="1.15"/><path d="M7.4 6.7H16.55V7.6H7.4Z"/></svg></a><a class="ab last" style="left:212px"><svg width="24" height="22" viewBox="0 0 24 22" style="left:-1px;top:-1px"><path d="M7.6 4.8 16.5 10.25 7.6 15.7Z"/></svg></a>
<span class="c" style="left:264.4px;letter-spacing:-.07px">QA - Games</span><span class="c" style="left:435px;letter-spacing:.10px">MNV - 0005</span><span class="c" style="left:565.2px;letter-spacing:.05px">As a Games admin, I want to test an order with only physical ...</span><span class="st s2"><span style="letter-spacing:.20px">GAM - MultipleNotVirtual</span></span><span class="c up" style="left:1132.3px;transform:scaleX(0.928)">WORKING</span><span class="c" style="left:1282.2px;letter-spacing:-.34px">Games</span><span class="c up" style="left:1432.3px;transform:scaleX(0.943)">NACON</span>
</div>
<div class="row" style="top:301px">
<i class="cb"></i>
<a class="ab first" style="left:57px"><svg width="24" height="22" viewBox="0 0 24 22" style="left:-1px;top:-1px"><path transform="translate(5.6 4)" d="M.2 11.8 1.1 8.6 7.4 2.3 9.5 4.4 3.2 10.7ZM7.9 1.8 9.6.1 11.7 2.2 10 3.9Z"/></svg></a><a class="ab blue" style="left:85px"><svg width="24" height="22" viewBox="0 0 24 22" style="left:-1px;top:-1px"><g transform="translate(5.8 3.9)"><path d="M5.4 2.45H3.6A2.55 2.55 0 0 0 1.05 5V8.6A2.55 2.55 0 0 0 3.6 11.15H7.7A2.55 2.55 0 0 0 10.25 8.6V7.4" fill="none" stroke="#fff" stroke-width="2.1"/><path d="M6.8 0H12.2V5.4L10.45 3.65 7.1 7 5.2 5.1 8.55 1.75Z" fill="#fff"/></g></svg></a><a class="ab" style="left:113px"><svg width="24" height="22" viewBox="0 0 24 22" style="left:-1px;top:-1px"><g transform="translate(5.7 3.8)"><path d="M0 2.2H4.3L6.8 4.7V11.9H0ZM5.2 0H9.3L12 2.7V9.8H7.7V4.3L5.2 1.8Z"/><path d="M9.4.4V2.6H11.7M4.3 2.6V4.7H6.5" stroke="#fff" stroke-width=".7" fill="none"/></g></svg></a><a class="ab" style="left:141px"><svg width="24" height="22" viewBox="0 0 24 22" style="left:-1px;top:-1px"><path d="M5.6 12.8H16.8V15.7H5.6ZM8.7 3.9H16V10.7Z"/><path d="M12.6 7.4 8.9 10.9" stroke="#444" stroke-width="2.2" stroke-dasharray="1.3 .6" fill="none"/><circle cx="15.4" cy="14.3" r=".55" fill="#ccc"/></svg></a><a class="ab" style="left:164px"><svg width="24" height="22" viewBox="0 0 24 22" style="left:-1px;top:-1px"><path d="M6.4 4.8H17.6V5.8H6.4Z"/><path d="M10.3 4.8V3.9A.6.6 0 0 1 10.9 3.3H13.4A.6.6 0 0 1 14 3.9V4.8" fill="none" stroke="#333" stroke-width="1"/><path d="M7.95 6.8V14.2A1 1 0 0 0 8.95 15.2H15A1 1 0 0 0 16 14.2V6.8M10.6 6.8V15M13.3 6.8V15" fill="none" stroke="#333" stroke-width="1.15"/><path d="M7.4 6.7H16.55V7.6H7.4Z"/></svg></a><a class="ab last" style="left:212px"><svg width="24" height="22" viewBox="0 0 24 22" style="left:-1px;top:-1px"><path d="M7.6 4.8 16.5 10.25 7.6 15.7Z"/></svg></a>
<span class="c" style="left:264.4px;letter-spacing:-.07px">QA - Games</span><span class="c" style="left:435px;letter-spacing:.10px">MNV - 0006</span><span class="c" style="left:565.2px;letter-spacing:.05px">As a Games admin, I want to test an order with only physical ...</span><span class="st s2"><span style="letter-spacing:.20px">GAM - MultipleNotVirtual</span></span><span class="c up" style="left:1132.3px;transform:scaleX(0.928)">WORKING</span><span class="c" style="left:1282.2px;letter-spacing:-.34px">Games</span><span class="c up" style="left:1432.3px;transform:scaleX(0.943)">NACON</span>
</div>
<div class="row" style="top:334px">
<i class="cb"></i>
<a class="ab first" style="left:57px"><svg width="24" height="22" viewBox="0 0 24 22" style="left:-1px;top:-1px"><path transform="translate(5.6 4)" d="M.2 11.8 1.1 8.6 7.4 2.3 9.5 4.4 3.2 10.7ZM7.9 1.8 9.6.1 11.7 2.2 10 3.9Z"/></svg></a><a class="ab blue" style="left:85px"><svg width="24" height="22" viewBox="0 0 24 22" style="left:-1px;top:-1px"><g transform="translate(5.8 3.9)"><path d="M5.4 2.45H3.6A2.55 2.55 0 0 0 1.05 5V8.6A2.55 2.55 0 0 0 3.6 11.15H7.7A2.55 2.55 0 0 0 10.25 8.6V7.4" fill="none" stroke="#fff" stroke-width="2.1"/><path d="M6.8 0H12.2V5.4L10.45 3.65 7.1 7 5.2 5.1 8.55 1.75Z" fill="#fff"/></g></svg></a><a class="ab" style="left:113px"><svg width="24" height="22" viewBox="0 0 24 22" style="left:-1px;top:-1px"><g transform="translate(5.7 3.8)"><path d="M0 2.2H4.3L6.8 4.7V11.9H0ZM5.2 0H9.3L12 2.7V9.8H7.7V4.3L5.2 1.8Z"/><path d="M9.4.4V2.6H11.7M4.3 2.6V4.7H6.5" stroke="#fff" stroke-width=".7" fill="none"/></g></svg></a><a class="ab" style="left:141px"><svg width="24" height="22" viewBox="0 0 24 22" style="left:-1px;top:-1px"><path d="M5.6 12.8H16.8V15.7H5.6ZM8.7 3.9H16V10.7Z"/><path d="M12.6 7.4 8.9 10.9" stroke="#444" stroke-width="2.2" stroke-dasharray="1.3 .6" fill="none"/><circle cx="15.4" cy="14.3" r=".55" fill="#ccc"/></svg></a><a class="ab" style="left:164px"><svg width="24" height="22" viewBox="0 0 24 22" style="left:-1px;top:-1px"><path d="M6.4 4.8H17.6V5.8H6.4Z"/><path d="M10.3 4.8V3.9A.6.6 0 0 1 10.9 3.3H13.4A.6.6 0 0 1 14 3.9V4.8" fill="none" stroke="#333" stroke-width="1"/><path d="M7.95 6.8V14.2A1 1 0 0 0 8.95 15.2H15A1 1 0 0 0 16 14.2V6.8M10.6 6.8V15M13.3 6.8V15" fill="none" stroke="#333" stroke-width="1.15"/><path d="M7.4 6.7H16.55V7.6H7.4Z"/></svg></a><a class="ab last" style="left:212px"><svg width="24" height="22" viewBox="0 0 24 22" style="left:-1px;top:-1px"><path d="M7.6 4.8 16.5 10.25 7.6 15.7Z"/></svg></a>
<span class="c" style="left:264.4px;letter-spacing:-.07px">QA - Games</span><span class="c" style="left:435px;letter-spacing:.14px">MVWP - 0001</span><span class="c" style="left:565.2px;letter-spacing:.03px">As a Games admin, I want to test an order with one physical ...</span><span class="st s3"><span style="letter-spacing:.20px">GAM - MultipleVirtualWithOneProduct</span></span><span class="c up" style="left:1132.3px;transform:scaleX(0.928)">WORKING</span><span class="c" style="left:1282.2px;letter-spacing:-.34px">Games</span><span class="c up" style="left:1432.3px;transform:scaleX(0.943)">NACON</span>
</div>
<div class="row" style="top:367px">
<i class="cb"></i>
<a class="ab first" style="left:57px"><svg width="24" height="22" viewBox="0 0 24 22" style="left:-1px;top:-1px"><path transform="translate(5.6 4)" d="M.2 11.8 1.1 8.6 7.4 2.3 9.5 4.4 3.2 10.7ZM7.9 1.8 9.6.1 11.7 2.2 10 3.9Z"/></svg></a><a class="ab blue" style="left:85px"><svg width="24" height="22" viewBox="0 0 24 22" style="left:-1px;top:-1px"><g transform="translate(5.8 3.9)"><path d="M5.4 2.45H3.6A2.55 2.55 0 0 0 1.05 5V8.6A2.55 2.55 0 0 0 3.6 11.15H7.7A2.55 2.55 0 0 0 10.25 8.6V7.4" fill="none" stroke="#fff" stroke-width="2.1"/><path d="M6.8 0H12.2V5.4L10.45 3.65 7.1 7 5.2 5.1 8.55 1.75Z" fill="#fff"/></g></svg></a><a class="ab" style="left:113px"><svg width="24" height="22" viewBox="0 0 24 22" style="left:-1px;top:-1px"><g transform="translate(5.7 3.8)"><path d="M0 2.2H4.3L6.8 4.7V11.9H0ZM5.2 0H9.3L12 2.7V9.8H7.7V4.3L5.2 1.8Z"/><path d="M9.4.4V2.6H11.7M4.3 2.6V4.7H6.5" stroke="#fff" stroke-width=".7" fill="none"/></g></svg></a><a class="ab" style="left:141px"><svg width="24" height="22" viewBox="0 0 24 22" style="left:-1px;top:-1px"><path d="M5.6 12.8H16.8V15.7H5.6ZM8.7 3.9H16V10.7Z"/><path d="M12.6 7.4 8.9 10.9" stroke="#444" stroke-width="2.2" stroke-dasharray="1.3 .6" fill="none"/><circle cx="15.4" cy="14.3" r=".55" fill="#ccc"/></svg></a><a class="ab" style="left:164px"><svg width="24" height="22" viewBox="0 0 24 22" style="left:-1px;top:-1px"><path d="M6.4 4.8H17.6V5.8H6.4Z"/><path d="M10.3 4.8V3.9A.6.6 0 0 1 10.9 3.3H13.4A.6.6 0 0 1 14 3.9V4.8" fill="none" stroke="#333" stroke-width="1"/><path d="M7.95 6.8V14.2A1 1 0 0 0 8.95 15.2H15A1 1 0 0 0 16 14.2V6.8M10.6 6.8V15M13.3 6.8V15" fill="none" stroke="#333" stroke-width="1.15"/><path d="M7.4 6.7H16.55V7.6H7.4Z"/></svg></a><a class="ab last" style="left:212px"><svg width="24" height="22" viewBox="0 0 24 22" style="left:-1px;top:-1px"><path d="M7.6 4.8 16.5 10.25 7.6 15.7Z"/></svg></a>
<span class="c" style="left:264.4px;letter-spacing:-.07px">QA - Games</span><span class="c" style="left:435px;letter-spacing:.14px">MVWP - 0002</span><span class="c" style="left:565.2px;letter-spacing:.03px">As a Games admin, I want to test an order with one physical ...</span><span class="st s3"><span style="letter-spacing:.20px">GAM - MultipleVirtualWithOneProduct</span></span><span class="c up" style="left:1132.3px;transform:scaleX(0.928)">WORKING</span><span class="c" style="left:1282.2px;letter-spacing:-.34px">Games</span><span class="c up" style="left:1432.3px;transform:scaleX(0.943)">NACON</span>
</div>
<div class="row" style="top:400px">
<i class="cb"></i>
<a class="ab first" style="left:57px"><svg width="24" height="22" viewBox="0 0 24 22" style="left:-1px;top:-1px"><path transform="translate(5.6 4)" d="M.2 11.8 1.1 8.6 7.4 2.3 9.5 4.4 3.2 10.7ZM7.9 1.8 9.6.1 11.7 2.2 10 3.9Z"/></svg></a><a class="ab blue" style="left:85px"><svg width="24" height="22" viewBox="0 0 24 22" style="left:-1px;top:-1px"><g transform="translate(5.8 3.9)"><path d="M5.4 2.45H3.6A2.55 2.55 0 0 0 1.05 5V8.6A2.55 2.55 0 0 0 3.6 11.15H7.7A2.55 2.55 0 0 0 10.25 8.6V7.4" fill="none" stroke="#fff" stroke-width="2.1"/><path d="M6.8 0H12.2V5.4L10.45 3.65 7.1 7 5.2 5.1 8.55 1.75Z" fill="#fff"/></g></svg></a><a class="ab" style="left:113px"><svg width="24" height="22" viewBox="0 0 24 22" style="left:-1px;top:-1px"><g transform="translate(5.7 3.8)"><path d="M0 2.2H4.3L6.8 4.7V11.9H0ZM5.2 0H9.3L12 2.7V9.8H7.7V4.3L5.2 1.8Z"/><path d="M9.4.4V2.6H11.7M4.3 2.6V4.7H6.5" stroke="#fff" stroke-width=".7" fill="none"/></g></svg></a><a class="ab" style="left:141px"><svg width="24" height="22" viewBox="0 0 24 22" style="left:-1px;top:-1px"><path d="M5.6 12.8H16.8V15.7H5.6ZM8.7 3.9H16V10.7Z"/><path d="M12.6 7.4 8.9 10.9" stroke="#444" stroke-width="2.2" stroke-dasharray="1.3 .6" fill="none"/><circle cx="15.4" cy="14.3" r=".55" fill="#ccc"/></svg></a><a class="ab" style="left:164px"><svg width="24" height="22" viewBox="0 0 24 22" style="left:-1px;top:-1px"><path d="M6.4 4.8H17.6V5.8H6.4Z"/><path d="M10.3 4.8V3.9A.6.6 0 0 1 10.9 3.3H13.4A.6.6 0 0 1 14 3.9V4.8" fill="none" stroke="#333" stroke-width="1"/><path d="M7.95 6.8V14.2A1 1 0 0 0 8.95 15.2H15A1 1 0 0 0 16 14.2V6.8M10.6 6.8V15M13.3 6.8V15" fill="none" stroke="#333" stroke-width="1.15"/><path d="M7.4 6.7H16.55V7.6H7.4Z"/></svg></a><a class="ab last" style="left:212px"><svg width="24" height="22" viewBox="0 0 24 22" style="left:-1px;top:-1px"><path d="M7.6 4.8 16.5 10.25 7.6 15.7Z"/></svg></a>
<span class="c" style="left:264.4px;letter-spacing:-.07px">QA - Games</span><span class="c" style="left:435px;letter-spacing:.14px">MVWP - 0003</span><span class="c" style="left:565.2px;letter-spacing:.03px">As a Games admin, I want to test an order with one physical ...</span><span class="st s3"><span style="letter-spacing:.20px">GAM - MultipleVirtualWithOneProduct</span></span><span class="c up" style="left:1132.3px;transform:scaleX(0.928)">WORKING</span><span class="c" style="left:1282.2px;letter-spacing:-.34px">Games</span><span class="c up" style="left:1432.3px;transform:scaleX(0.943)">NACON</span>
</div>
<div class="row" style="top:433px">
<i class="cb"></i>
<a class="ab first" style="left:57px"><svg width="24" height="22" viewBox="0 0 24 22" style="left:-1px;top:-1px"><path transform="translate(5.6 4)" d="M.2 11.8 1.1 8.6 7.4 2.3 9.5 4.4 3.2 10.7ZM7.9 1.8 9.6.1 11.7 2.2 10 3.9Z"/></svg></a><a class="ab blue" style="left:85px"><svg width="24" height="22" viewBox="0 0 24 22" style="left:-1px;top:-1px"><g transform="translate(5.8 3.9)"><path d="M5.4 2.45H3.6A2.55 2.55 0 0 0 1.05 5V8.6A2.55 2.55 0 0 0 3.6 11.15H7.7A2.55 2.55 0 0 0 10.25 8.6V7.4" fill="none" stroke="#fff" stroke-width="2.1"/><path d="M6.8 0H12.2V5.4L10.45 3.65 7.1 7 5.2 5.1 8.55 1.75Z" fill="#fff"/></g></svg></a><a class="ab" style="left:113px"><svg width="24" height="22" viewBox="0 0 24 22" style="left:-1px;top:-1px"><g transform="translate(5.7 3.8)"><path d="M0 2.2H4.3L6.8 4.7V11.9H0ZM5.2 0H9.3L12 2.7V9.8H7.7V4.3L5.2 1.8Z"/><path d="M9.4.4V2.6H11.7M4.3 2.6V4.7H6.5" stroke="#fff" stroke-width=".7" fill="none"/></g></svg></a><a class="ab" style="left:141px"><svg width="24" height="22" viewBox="0 0 24 22" style="left:-1px;top:-1px"><path d="M5.6 12.8H16.8V15.7H5.6ZM8.7 3.9H16V10.7Z"/><path d="M12.6 7.4 8.9 10.9" stroke="#444" stroke-width="2.2" stroke-dasharray="1.3 .6" fill="none"/><circle cx="15.4" cy="14.3" r=".55" fill="#ccc"/></svg></a><a class="ab" style="left:164px"><svg width="24" height="22" viewBox="0 0 24 22" style="left:-1px;top:-1px"><path d="M6.4 4.8H17.6V5.8H6.4Z"/><path d="M10.3 4.8V3.9A.6.6 0 0 1 10.9 3.3H13.4A.6.6 0 0 1 14 3.9V4.8" fill="none" stroke="#333" stroke-width="1"/><path d="M7.95 6.8V14.2A1 1 0 0 0 8.95 15.2H15A1 1 0 0 0 16 14.2V6.8M10.6 6.8V15M13.3 6.8V15" fill="none" stroke="#333" stroke-width="1.15"/><path d="M7.4 6.7H16.55V7.6H7.4Z"/></svg></a><a class="ab last" style="left:212px"><svg width="24" height="22" viewBox="0 0 24 22" style="left:-1px;top:-1px"><path d="M7.6 4.8 16.5 10.25 7.6 15.7Z"/></svg></a>
<span class="c" style="left:264.4px;letter-spacing:-.07px">QA - Games</span><span class="c" style="left:435px;letter-spacing:.14px">MVWP - 0004</span><span class="c" style="left:565.2px;letter-spacing:.03px">As a Games admin, I want to test an order with one physical ...</span><span class="st s3"><span style="letter-spacing:.20px">GAM - MultipleVirtualWithOneProduct</span></span><span class="c up" style="left:1132.3px;transform:scaleX(0.928)">WORKING</span><span class="c" style="left:1282.2px;letter-spacing:-.34px">Games</span><span class="c up" style="left:1432.3px;transform:scaleX(0.943)">NACON</span>
</div>
<div class="row" style="top:466px">
<i class="cb"></i>
<a class="ab first" style="left:57px"><svg width="24" height="22" viewBox="0 0 24 22" style="left:-1px;top:-1px"><path transform="translate(5.6 4)" d="M.2 11.8 1.1 8.6 7.4 2.3 9.5 4.4 3.2 10.7ZM7.9 1.8 9.6.1 11.7 2.2 10 3.9Z"/></svg></a><a class="ab blue" style="left:85px"><svg width="24" height="22" viewBox="0 0 24 22" style="left:-1px;top:-1px"><g transform="translate(5.8 3.9)"><path d="M5.4 2.45H3.6A2.55 2.55 0 0 0 1.05 5V8.6A2.55 2.55 0 0 0 3.6 11.15H7.7A2.55 2.55 0 0 0 10.25 8.6V7.4" fill="none" stroke="#fff" stroke-width="2.1"/><path d="M6.8 0H12.2V5.4L10.45 3.65 7.1 7 5.2 5.1 8.55 1.75Z" fill="#fff"/></g></svg></a><a class="ab" style="left:113px"><svg width="24" height="22" viewBox="0 0 24 22" style="left:-1px;top:-1px"><g transform="translate(5.7 3.8)"><path d="M0 2.2H4.3L6.8 4.7V11.9H0ZM5.2 0H9.3L12 2.7V9.8H7.7V4.3L5.2 1.8Z"/><path d="M9.4.4V2.6H11.7M4.3 2.6V4.7H6.5" stroke="#fff" stroke-width=".7" fill="none"/></g></svg></a><a class="ab" style="left:141px"><svg width="24" height="22" viewBox="0 0 24 22" style="left:-1px;top:-1px"><path d="M5.6 12.8H16.8V15.7H5.6ZM8.7 3.9H16V10.7Z"/><path d="M12.6 7.4 8.9 10.9" stroke="#444" stroke-width="2.2" stroke-dasharray="1.3 .6" fill="none"/><circle cx="15.4" cy="14.3" r=".55" fill="#ccc"/></svg></a><a class="ab" style="left:164px"><svg width="24" height="22" viewBox="0 0 24 22" style="left:-1px;top:-1px"><path d="M6.4 4.8H17.6V5.8H6.4Z"/><path d="M10.3 4.8V3.9A.6.6 0 0 1 10.9 3.3H13.4A.6.6 0 0 1 14 3.9V4.8" fill="none" stroke="#333" stroke-width="1"/><path d="M7.95 6.8V14.2A1 1 0 0 0 8.95 15.2H15A1 1 0 0 0 16 14.2V6.8M10.6 6.8V15M13.3 6.8V15" fill="none" stroke="#333" stroke-width="1.15"/><path d="M7.4 6.7H16.55V7.6H7.4Z"/></svg></a><a class="ab last" style="left:212px"><svg width="24" height="22" viewBox="0 0 24 22" style="left:-1px;top:-1px"><path d="M7.6 4.8 16.5 10.25 7.6 15.7Z"/></svg></a>
<span class="c" style="left:264.4px;letter-spacing:-.07px">QA - Games</span><span class="c" style="left:435px;letter-spacing:.14px">MVWP - 0005</span><span class="c" style="left:565.2px;letter-spacing:.03px">As a Games admin, I want to test an order with one physical ...</span><span class="st s3"><span style="letter-spacing:.20px">GAM - MultipleVirtualWithOneProduct</span></span><span class="c up" style="left:1132.3px;transform:scaleX(0.928)">WORKING</span><span class="c" style="left:1282.2px;letter-spacing:-.34px">Games</span><span class="c up" style="left:1432.3px;transform:scaleX(0.943)">NACON</span>
</div>
<div class="row" style="top:499px">
<i class="cb"></i>
<a class="ab first" style="left:57px"><svg width="24" height="22" viewBox="0 0 24 22" style="left:-1px;top:-1px"><path transform="translate(5.6 4)" d="M.2 11.8 1.1 8.6 7.4 2.3 9.5 4.4 3.2 10.7ZM7.9 1.8 9.6.1 11.7 2.2 10 3.9Z"/></svg></a><a class="ab blue" style="left:85px"><svg width="24" height="22" viewBox="0 0 24 22" style="left:-1px;top:-1px"><g transform="translate(5.8 3.9)"><path d="M5.4 2.45H3.6A2.55 2.55 0 0 0 1.05 5V8.6A2.55 2.55 0 0 0 3.6 11.15H7.7A2.55 2.55 0 0 0 10.25 8.6V7.4" fill="none" stroke="#fff" stroke-width="2.1"/><path d="M6.8 0H12.2V5.4L10.45 3.65 7.1 7 5.2 5.1 8.55 1.75Z" fill="#fff"/></g></svg></a><a class="ab" style="left:113px"><svg width="24" height="22" viewBox="0 0 24 22" style="left:-1px;top:-1px"><g transform="translate(5.7 3.8)"><path d="M0 2.2H4.3L6.8 4.7V11.9H0ZM5.2 0H9.3L12 2.7V9.8H7.7V4.3L5.2 1.8Z"/><path d="M9.4.4V2.6H11.7M4.3 2.6V4.7H6.5" stroke="#fff" stroke-width=".7" fill="none"/></g></svg></a><a class="ab" style="left:141px"><svg width="24" height="22" viewBox="0 0 24 22" style="left:-1px;top:-1px"><path d="M5.6 12.8H16.8V15.7H5.6ZM8.7 3.9H16V10.7Z"/><path d="M12.6 7.4 8.9 10.9" stroke="#444" stroke-width="2.2" stroke-dasharray="1.3 .6" fill="none"/><circle cx="15.4" cy="14.3" r=".55" fill="#ccc"/></svg></a><a class="ab" style="left:164px"><svg width="24" height="22" viewBox="0 0 24 22" style="left:-1px;top:-1px"><path d="M6.4 4.8H17.6V5.8H6.4Z"/><path d="M10.3 4.8V3.9A.6.6 0 0 1 10.9 3.3H13.4A.6.6 0 0 1 14 3.9V4.8" fill="none" stroke="#333" stroke-width="1"/><path d="M7.95 6.8V14.2A1 1 0 0 0 8.95 15.2H15A1 1 0 0 0 16 14.2V6.8M10.6 6.8V15M13.3 6.8V15" fill="none" stroke="#333" stroke-width="1.15"/><path d="M7.4 6.7H16.55V7.6H7.4Z"/></svg></a><a class="ab last" style="left:212px"><svg width="24" height="22" viewBox="0 0 24 22" style="left:-1px;top:-1px"><path d="M7.6 4.8 16.5 10.25 7.6 15.7Z"/></svg></a>
<span class="c" style="left:264.4px;letter-spacing:-.07px">QA - Games</span><span class="c" style="left:435px;letter-spacing:.14px">MVWP - 0006</span><span class="c" style="left:565.2px;letter-spacing:.03px">As a Games admin, I want to test an order with one physical ...</span><span class="st s3"><span style="letter-spacing:.20px">GAM - MultipleVirtualWithOneProduct</span></span><span class="c up" style="left:1132.3px;transform:scaleX(0.928)">WORKING</span><span class="c" style="left:1282.2px;letter-spacing:-.34px">Games</span><span class="c up" style="left:1432.3px;transform:scaleX(0.943)">NACON</span>
</div>
<div class="row" style="top:532px">
<i class="cb"></i>
<a class="ab first" style="left:57px"><svg width="24" height="22" viewBox="0 0 24 22" style="left:-1px;top:-1px"><path transform="translate(5.6 4)" d="M.2 11.8 1.1 8.6 7.4 2.3 9.5 4.4 3.2 10.7ZM7.9 1.8 9.6.1 11.7 2.2 10 3.9Z"/></svg></a><a class="ab blue" style="left:85px"><svg width="24" height="22" viewBox="0 0 24 22" style="left:-1px;top:-1px"><g transform="translate(5.8 3.9)"><path d="M5.4 2.45H3.6A2.55 2.55 0 0 0 1.05 5V8.6A2.55 2.55 0 0 0 3.6 11.15H7.7A2.55 2.55 0 0 0 10.25 8.6V7.4" fill="none" stroke="#fff" stroke-width="2.1"/><path d="M6.8 0H12.2V5.4L10.45 3.65 7.1 7 5.2 5.1 8.55 1.75Z" fill="#fff"/></g></svg></a><a class="ab" style="left:113px"><svg width="24" height="22" viewBox="0 0 24 22" style="left:-1px;top:-1px"><g transform="translate(5.7 3.8)"><path d="M0 2.2H4.3L6.8 4.7V11.9H0ZM5.2 0H9.3L12 2.7V9.8H7.7V4.3L5.2 1.8Z"/><path d="M9.4.4V2.6H11.7M4.3 2.6V4.7H6.5" stroke="#fff" stroke-width=".7" fill="none"/></g></svg></a><a class="ab" style="left:141px"><svg width="24" height="22" viewBox="0 0 24 22" style="left:-1px;top:-1px"><path d="M5.6 12.8H16.8V15.7H5.6ZM8.7 3.9H16V10.7Z"/><path d="M12.6 7.4 8.9 10.9" stroke="#444" stroke-width="2.2" stroke-dasharray="1.3 .6" fill="none"/><circle cx="15.4" cy="14.3" r=".55" fill="#ccc"/></svg></a><a class="ab" style="left:164px"><svg width="24" height="22" viewBox="0 0 24 22" style="left:-1px;top:-1px"><path d="M6.4 4.8H17.6V5.8H6.4Z"/><path d="M10.3 4.8V3.9A.6.6 0 0 1 10.9 3.3H13.4A.6.6 0 0 1 14 3.9V4.8" fill="none" stroke="#333" stroke-width="1"/><path d="M7.95 6.8V14.2A1 1 0 0 0 8.95 15.2H15A1 1 0 0 0 16 14.2V6.8M10.6 6.8V15M13.3 6.8V15" fill="none" stroke="#333" stroke-width="1.15"/><path d="M7.4 6.7H16.55V7.6H7.4Z"/></svg></a><a class="ab last" style="left:212px"><svg width="24" height="22" viewBox="0 0 24 22" style="left:-1px;top:-1px"><path d="M7.6 4.8 16.5 10.25 7.6 15.7Z"/></svg></a>
<span class="c" style="left:264.4px;letter-spacing:-.07px">QA - Games</span><span class="c" style="left:435px;letter-spacing:.16px">MWV - 0001</span><span class="c" style="left:565.2px;letter-spacing:.04px">As a Games admin, I want to test an order with more than on...</span><span class="st s4"><span style="letter-spacing:.21px">GAM - MultipleWithVirtual</span></span><span class="c up" style="left:1132.3px;transform:scaleX(0.928)">WORKING</span><span class="c" style="left:1282.2px;letter-spacing:-.34px">Games</span><span class="c up" style="left:1432.3px;transform:scaleX(0.943)">NACON</span>
</div>
<div class="row" style="top:565px">
<i class="cb"></i>
<a class="ab first" style="left:57px"><svg width="24" height="22" viewBox="0 0 24 22" style="left:-1px;top:-1px"><path transform="translate(5.6 4)" d="M.2 11.8 1.1 8.6 7.4 2.3 9.5 4.4 3.2 10.7ZM7.9 1.8 9.6.1 11.7 2.2 10 3.9Z"/></svg></a><a class="ab blue" style="left:85px"><svg width="24" height="22" viewBox="0 0 24 22" style="left:-1px;top:-1px"><g transform="translate(5.8 3.9)"><path d="M5.4 2.45H3.6A2.55 2.55 0 0 0 1.05 5V8.6A2.55 2.55 0 0 0 3.6 11.15H7.7A2.55 2.55 0 0 0 10.25 8.6V7.4" fill="none" stroke="#fff" stroke-width="2.1"/><path d="M6.8 0H12.2V5.4L10.45 3.65 7.1 7 5.2 5.1 8.55 1.75Z" fill="#fff"/></g></svg></a><a class="ab" style="left:113px"><svg width="24" height="22" viewBox="0 0 24 22" style="left:-1px;top:-1px"><g transform="translate(5.7 3.8)"><path d="M0 2.2H4.3L6.8 4.7V11.9H0ZM5.2 0H9.3L12 2.7V9.8H7.7V4.3L5.2 1.8Z"/><path d="M9.4.4V2.6H11.7M4.3 2.6V4.7H6.5" stroke="#fff" stroke-width=".7" fill="none"/></g></svg></a><a class="ab" style="left:141px"><svg width="24" height="22" viewBox="0 0 24 22" style="left:-1px;top:-1px"><path d="M5.6 12.8H16.8V15.7H5.6ZM8.7 3.9H16V10.7Z"/><path d="M12.6 7.4 8.9 10.9" stroke="#444" stroke-width="2.2" stroke-dasharray="1.3 .6" fill="none"/><circle cx="15.4" cy="14.3" r=".55" fill="#ccc"/></svg></a><a class="ab" style="left:164px"><svg width="24" height="22" viewBox="0 0 24 22" style="left:-1px;top:-1px"><path d="M6.4 4.8H17.6V5.8H6.4Z"/><path d="M10.3 4.8V3.9A.6.6 0 0 1 10.9 3.3H13.4A.6.6 0 0 1 14 3.9V4.8" fill="none" stroke="#333" stroke-width="1"/><path d="M7.95 6.8V14.2A1 1 0 0 0 8.95 15.2H15A1 1 0 0 0 16 14.2V6.8M10.6 6.8V15M13.3 6.8V15" fill="none" stroke="#333" stroke-width="1.15"/><path d="M7.4 6.7H16.55V7.6H7.4Z"/></svg></a><a class="ab last" style="left:212px"><svg width="24" height="22" viewBox="0 0 24 22" style="left:-1px;top:-1px"><path d="M7.6 4.8 16.5 10.25 7.6 15.7Z"/></svg></a>
<span class="c" style="left:264.4px;letter-spacing:-.07px">QA - Games</span><span class="c" style="left:435px;letter-spacing:.16px">MWV - 0002</span><span class="c" style="left:565.2px;letter-spacing:.04px">As a Games admin, I want to test an order with more than on...</span><span class="st s4"><span style="letter-spacing:.21px">GAM - MultipleWithVirtual</span></span><span class="c up" style="left:1132.3px;transform:scaleX(0.928)">WORKING</span><span class="c" style="left:1282.2px;letter-spacing:-.34px">Games</span><span class="c up" style="left:1432.3px;transform:scaleX(0.943)">NACON</span>
</div>
    <i class="vl" style="left:0"></i><i class="vl" style="left:51px"></i><i class="vl" style="left:258px"></i><i class="vl" style="left:429px"></i><i class="vl" style="left:559px"></i><i class="vl" style="left:924px"></i><i class="vl" style="left:1126px"></i><i class="vl" style="left:1276px"></i><i class="vl" style="left:1426px"></i>
  </div>
  <div id="sb"><i></i></div>
  <span class="t" style="left:301px;top:839.5px;font-size:12.5px;letter-spacing:.02px;letter-spacing:.08px">Affichage de l'élément 1 à 15 sur 30 éléments</span>
</div>
<span class="t" style="left:300px;top:913px;font-size:12.5px;color:#333;letter-spacing:.12px">Page générée le 2026-02-02T16:45:24.408Z par Cerberus4.20-SNAPSHOT-1924 Build 20250818-160401 en environnement : prd et a pris 151ms (date du navigateur : 2026-02-02T15:45:24.484Z) - Ouvrir un bug ou envoyer une demande d'évolution <span style="color:#1480e0">ici</span>.</span>
</div>
</body>
</html>
